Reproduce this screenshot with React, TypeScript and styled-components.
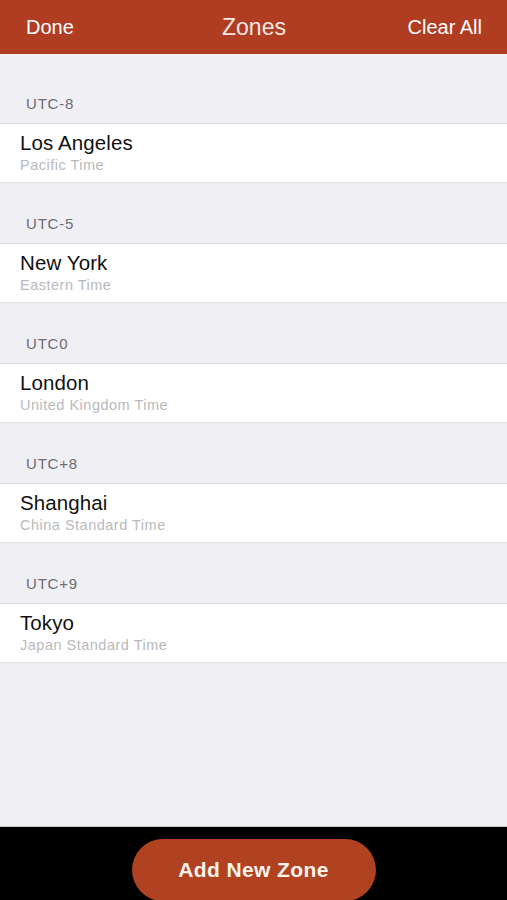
import React from "react";
import styled, { createGlobalStyle } from "styled-components";

interface Zone {
  offset: string;
  city: string;
  name: string;
}

const zones: Zone[] = [
  { offset: "UTC-8", city: "Los Angeles", name: "Pacific Time" },
  { offset: "UTC-5", city: "New York", name: "Eastern Time" },
  { offset: "UTC0", city: "London", name: "United Kingdom Time" },
  { offset: "UTC+8", city: "Shanghai", name: "China Standard Time" },
  { offset: "UTC+9", city: "Tokyo", name: "Japan Standard Time" },
];

const GlobalStyle = createGlobalStyle`
  html, body {
    margin: 0;
    padding: 0;
    background: #efeff4;
  }
  * {
    box-sizing: border-box;
  }
`;

const Screen = styled.div`
  width: 507px;
  height: 900px;
  display: flex;
  flex-direction: column;
  font-family: "Liberation Sans", Arial, sans-serif;
  overflow: hidden;
`;

const NavBar = styled.header`
  height: 54px;
  flex-shrink: 0;
  background: #b03c22;
  display: grid;
  grid-template-columns: 1fr auto 1fr;
  align-items: center;
  padding: 0 25px 0 26px;
  color: #fff;
`;

const NavButton = styled.span<{ $align: "left" | "right" }>`
  font-size: 20px;
  text-align: ${(p) => p.$align};
`;

const NavTitle = styled.span`
  font-size: 23px;
  color: #f6e6e0;
`;

const List = styled.main`
  flex: 1;
  background: #efeff4;
  padding-top: 9px;
`;

const SectionHeader = styled.div`
  height: 60px;
  display: flex;
  align-items: flex-end;
  padding: 0 0 11px 26px;
  font-size: 15px;
  letter-spacing: 0.8px;
  color: #6d6d72;
`;

const Row = styled.div`
  height: 60px;
  background: #fff;
  border-top: 1px solid #e0e0e4;
  border-bottom: 1px solid #e0e0e4;
  display: flex;
  flex-direction: column;
  justify-content: center;
  padding: 0 20px 2px;
  gap: 2px;
`;

const City = styled.div`
  font-size: 20.5px;
  letter-spacing: 0.1px;
  color: #111;
`;

const ZoneName = styled.div`
  font-size: 14.5px;
  letter-spacing: 0.5px;
  color: #b9b9bd;
`;

const Footer = styled.footer`
  height: 74px;
  flex-shrink: 0;
  background: #000;
  border-top: 1px solid #c8c8cc;
  display: flex;
  justify-content: center;
  padding-top: 12px;
`;

const AddButton = styled.button`
  width: 244px;
  height: 62px;
  border: none;
  border-radius: 31px;
  background: #b04222;
  color: #fdf3ea;
  font-family: "Liberation Sans", Arial, sans-serif;
  font-size: 21px;
  font-weight: 700;
  letter-spacing: 0.4px;
  padding-bottom: 2px;
`;

export default function App() {
  return (
    <Screen>
      <GlobalStyle />
      <NavBar>
        <NavButton $align="left">Done</NavButton>
        <NavTitle>Zones</NavTitle>
        <NavButton $align="right">Clear All</NavButton>
      </NavBar>
      <List>
        {zones.map((zone) => (
          <React.Fragment key={zone.offset}>
            <SectionHeader>{zone.offset}</SectionHeader>
            <Row>
              <City>{zone.city}</City>
              <ZoneName>{zone.name}</ZoneName>
            </Row>
          </React.Fragment>
        ))}
      </List>
      <Footer>
        <AddButton>Add New Zone</AddButton>
      </Footer>
    </Screen>
  );
}
